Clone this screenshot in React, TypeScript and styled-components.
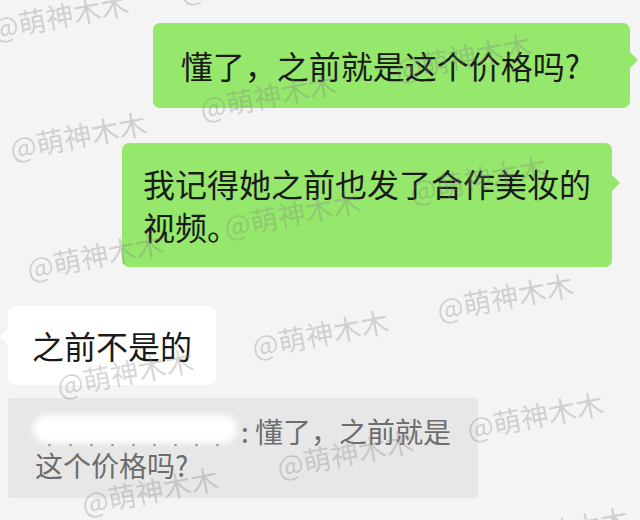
import styled, { createGlobalStyle, css } from 'styled-components'

const GlobalStyle = createGlobalStyle`
  html, body {
    margin: 0;
    padding: 0;
    background: #f4f4f4;
  }

  body {
    font-family: 'Noto Sans CJK SC', 'Noto Sans', sans-serif;
  }
`

const Screen = styled.div`
  position: relative;
  box-sizing: border-box;
  width: 640px;
  height: 520px;
  padding-top: 23px;
  overflow: hidden;
  background: #f4f4f4;
  display: flex;
  flex-direction: column;
`

const Row = styled.div<{ $mine?: boolean; $gap: number; $inset: number }>`
  display: flex;
  justify-content: ${(p) => (p.$mine ? 'flex-end' : 'flex-start')};
  margin-top: ${(p) => p.$gap}px;
  padding: ${(p) => (p.$mine ? `0 ${p.$inset}px 0 0` : `0 0 0 ${p.$inset}px`)};
`

const Bubble = styled.div<{ $mine?: boolean; $tail: number; $pad: string }>`
  position: relative;
  box-sizing: border-box;
  padding: ${(p) => p.$pad};
  border-radius: 7px;
  background: ${(p) => (p.$mine ? '#95e86b' : '#ffffff')};
  color: #1a1a1a;
  font-size: 32px;
  line-height: 43px;
  white-space: nowrap;

  &::after {
    content: '';
    position: absolute;
    top: ${(p) => p.$tail - 8}px;
    border: 8px solid transparent;
    ${(p) =>
      p.$mine
        ? css`
            left: 100%;
            border-right-width: 0;
            border-left-color: #95e86b;
          `
        : css`
            right: 100%;
            border-left-width: 0;
            border-right-color: #ffffff;
          `}
  }
`

const Quote = styled.div`
  box-sizing: border-box;
  width: 470px;
  margin: 13px 0 0 8px;
  padding: 16px 20px 16px 27px;
  border-radius: 2px;
  background: #e7e7e7;
  color: #6d6d6d;
  font-size: 28px;
  line-height: 34px;
  white-space: nowrap;
`

const HiddenName = styled.span`
  display: inline-block;
  position: relative;
  width: 200px;
  height: 30px;
  margin-right: 6px;
  vertical-align: -5px;
  background: radial-gradient(circle, #7a7a7a 1px, transparent 1.6px) 4px 24px / 21px 6px repeat-x;

  &::after {
    content: '';
    position: absolute;
    inset: -3px -2px 5px -2px;
    border-radius: 14px;
    background: #ffffff;
    filter: blur(3px);
  }
`

const WatermarkLayer = styled.div`
  position: absolute;
  inset: 0;
  pointer-events: none;
`

const Mark = styled.span`
  position: absolute;
  transform: translate(-50%, -50%) rotate(-11deg);
  font-size: 28px;
  line-height: 1;
  color: rgba(130, 130, 130, 0.33);
  white-space: nowrap;
`

const marks: [number, number][] = [
  [60, 15],
  [78, 135],
  [95, 255],
  [125, 372],
  [150, 490],
  [248, -22],
  [268, 95],
  [292, 213],
  [320, 333],
  [345, 453],
  [463, 56],
  [478, 178],
  [505, 296],
  [535, 415],
  [560, 530],
]

export default function App() {
  return (
    <Screen>
      <GlobalStyle />
      <Row $mine $gap={0} $inset={10}>
        <Bubble $mine $tail={37} $pad="21px 50px 21px 28px">
          懂了，之前就是这个价格吗?
        </Bubble>
      </Row>
      <Row $mine $gap={35} $inset={28}>
        <Bubble $mine $tail={40} $pad="19px 21px">
          我记得她之前也发了合作美妆的
          <br />
          视频。
        </Bubble>
      </Row>
      <Row $gap={39} $inset={8}>
        <Bubble $tail={31} $pad="18px 24px">
          之前不是的
        </Bubble>
      </Row>
      <Quote>
        <HiddenName />: 懂了，之前就是
        <br />
        这个价格吗?
      </Quote>

      <WatermarkLayer>
        {marks.map(([x, y], i) => (
          <Mark key={i} style={{ left: x, top: y }}>
            @萌神木木
          </Mark>
        ))}
      </WatermarkLayer>
    </Screen>
  )
}
